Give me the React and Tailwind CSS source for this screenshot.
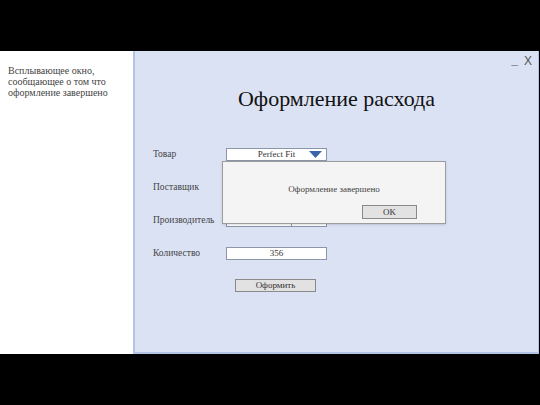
import React from 'react';

const serif = { fontFamily: '"Liberation Serif", "DejaVu Serif", serif' };

const Triangle = () => (
    <svg width="13" height="7" viewBox="0 0 13 7" className="block">
        <polygon points="0,0 13,0 6.5,7" fill="#3b63a8" />
    </svg>
);

const Select = ({ value, split }) => (
    <div className="w-[101px] h-[13px] bg-white border border-[#8b96ab] flex items-center text-[9px] leading-none text-[#333]">
        <div className={`flex-1 text-center ${split ? 'border-r border-[#8b96ab] h-full' : 'pl-[20px]'}`}>{value}</div>
        <div className={`${split ? 'w-[34px] justify-end' : 'w-[20px] justify-center'} flex pr-[1px]`}>
            <Triangle />
        </div>
    </div>
);

export default function App() {
    const rows = [
        { label: 'Товар', field: <Select value="Perfect Fit" /> },
        { label: 'Поставщик', field: <Select value="" /> },
        { label: 'Производитель', field: <Select value="" split /> },
        {
            label: 'Количество',
            field: (
                <div className="w-[101px] h-[13px] bg-white border border-[#8b96ab] flex items-center justify-center text-[9px] leading-none text-[#333]">356</div>
            ),
        },
    ];

    return (
        <div className="w-[540px] h-[405px] bg-black flex flex-col overflow-hidden" style={serif}>
            {/* верхняя черная полоса */}
            <div className="h-[51px] shrink-0" />

            <div className="h-[303px] shrink-0 flex">
                {/* пояснение слева */}
                <div className="w-[133px] bg-white pl-[8px] pt-[14px] text-[10px] leading-[11px] text-[#444]">
                    <p>Всплывающее окно,</p>
                    <p>сообщающее о том что</p>
                    <p>оформление завершено</p>
                </div>

                {/* окно формы */}
                <div className="relative w-[406px] bg-[#dbe2f4] border-l-2 border-b-2 border-r border-[#b3c3e6] flex flex-col">
                    <div className="h-[19px] flex justify-end items-start gap-[6px] pr-[6px] pt-[4px] text-[#555] text-[12px] leading-none" style={{ fontFamily: '"Liberation Sans", sans-serif' }}>
                        <span className="-mt-[1px] font-bold">_</span>
                        <span>X</span>
                    </div>

                    <h1 className="mt-[16px] text-center text-[22px] leading-[26px] text-[#111]">Оформление расхода</h1>

                    <div className="mt-[36px] pl-[18px] flex flex-col gap-y-[20px]">
                        {rows.map((r) => (
                            <div key={r.label} className="flex items-center h-[13px]">
                                <div className="w-[73px] text-[9.5px] leading-none text-[#444]">{r.label}</div>
                                {r.field}
                            </div>
                        ))}
                        <div className="flex -mt-[1px]">
                            <div className="w-[82px]" />
                            <button className="w-[81px] h-[13px] bg-[#e2e2e2] border border-[#8a8a8a] text-[9px] leading-none text-[#333]">
                                Оформить
                            </button>
                        </div>
                    </div>

                    {/* всплывающее окно */}
                    <div className="absolute left-[87px] top-[110px] w-[224px] h-[63px] bg-[#f4f4f4] border border-[#9c9c9c] shadow-sm flex flex-col items-center">
                        <p className="mt-[21px] text-[9px] leading-[12px] text-[#444]">Оформление завершено</p>
                        <div className="w-full flex justify-end pr-[28px] mt-[10px]">
                            <button className="w-[55px] h-[14px] bg-[#e2e2e2] border border-[#8a8a8a] text-[9px] leading-none text-[#333]">OK</button>
                        </div>
                    </div>
                </div>
            </div>

            <div className="flex-1" />
        </div>
    );
}
